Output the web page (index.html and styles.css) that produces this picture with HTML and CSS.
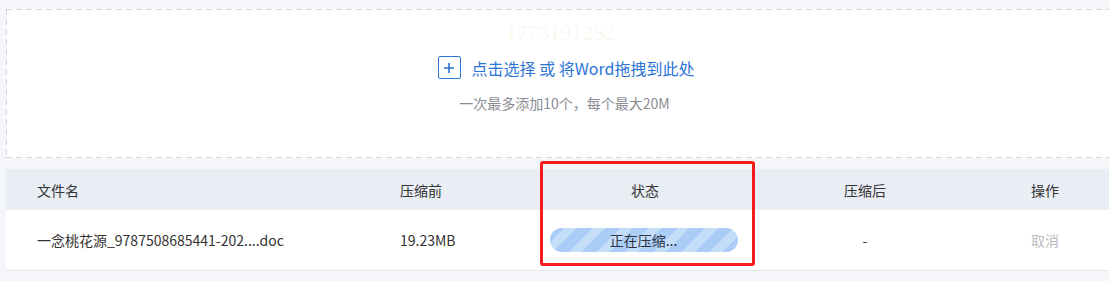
FILE: index.html
```html
<!DOCTYPE html>
<html lang="zh-CN">
<head>
    <meta charset="UTF-8">
    <meta name="viewport" content="width=device-width, initial-scale=1.0">
    <title>Word压缩</title>
    <link rel="stylesheet" href="styles.css">
</head>
<body>
    <div class="page">
        <div class="upload-zone">
            <div class="watermark">1773191252</div>
            <div class="pick">
                <span class="plus-box">
                    <svg width="12" height="12" viewBox="0 0 12 12"><path d="M6 1v10M1 6h10" stroke="#2b74d4" stroke-width="1.6" fill="none"/></svg>
                </span>
                <span class="pick-text">点击选择 或 将Word拖拽到此处</span>
            </div>
            <div class="hint">一次最多添加10个，每个最大20M</div>
        </div>

        <div class="file-table">
            <div class="row head">
                <div class="cell name">文件名</div>
                <div class="cell before">压缩前</div>
                <div class="cell status">状态</div>
                <div class="cell after">压缩后</div>
                <div class="cell op">操作</div>
            </div>
            <div class="row body-row">
                <div class="cell name">一念桃花源_9787508685441-202....doc</div>
                <div class="cell before">19.23MB</div>
                <div class="cell status">
                    <div class="progress">正在压缩...</div>
                </div>
                <div class="cell after">-</div>
                <div class="cell op cancel">取消</div>
            </div>
        </div>

        <!-- 标注框 -->
        <div class="mark-box"></div>
    </div>
</body>
</html>
```

FILE: styles.css
```css
html, body {
    margin: 0;
    padding: 0;
    overflow: hidden;
}

body {
    background: #f4f6f9;
    font-family: "Noto Sans CJK SC", "Noto Sans", sans-serif;
    color: #333;
}

.page {
    position: relative;
    width: 1109px;
    height: 281px;
    padding: 9px 0 0 6px;
    box-sizing: border-box;
}

.upload-zone {
    height: 149px;
    margin-right: -30px;
    background-color: #fff;
    background-image:
        repeating-linear-gradient(90deg, #d3d6dc 0 6px, transparent 6px 10px),
        repeating-linear-gradient(90deg, #d3d6dc 0 6px, transparent 6px 10px),
        repeating-linear-gradient(180deg, #d3d6dc 0 6px, transparent 6px 10px);
    background-size: 100% 1px, 100% 1px, 1px 100%;
    background-position: 0 0, 0 100%, 0 0;
    background-repeat: no-repeat;
    display: flex;
    flex-direction: column;
    align-items: center;
    padding-right: 30px;
}

.watermark {
    font-family: "Liberation Serif", serif;
    font-size: 22px;
    color: #f9f8f0;
    margin-top: 11px;
    height: 26px;
    line-height: 26px;
    margin-left: 6px;
}

.pick {
    display: flex;
    align-items: center;
    gap: 11px;
    margin-top: 10px;
    margin-left: 17px;
}

.plus-box {
    width: 21px;
    height: 21px;
    border: 1px solid #2b74d4;
    border-radius: 2px;
    display: flex;
    align-items: center;
    justify-content: center;
}

.pick-text {
    font-size: 16px;
    color: #2b74d4;
    line-height: 22px;
}

.hint {
    font-size: 14px;
    color: #8a8d93;
    margin-top: 14px;
    line-height: 20px;
    margin-left: 14px;
}

.file-table {
    margin-top: 11px;
    margin-right: -30px;
    background: #fff;
    border-bottom: 1px solid #e6e8ec;
}

.row {
    display: grid;
    grid-template-columns: 363px 171px 210px 230px 160px;
    align-items: center;
    font-size: 14px;
}

.row.head {
    height: 41px;
    background: #e9edf4;
    color: #333;
}

.row.body-row {
    height: 60px;
}

.cell.name,
.cell.before {
    padding-left: 31px;
}

.cell.status,
.cell.after {
    text-align: center;
}

.cell.status {
    display: flex;
    justify-content: center;
}

.cell.op {
    padding-left: 51px;
}

.cancel {
    color: #b8bbc0;
}

.progress {
    width: 188px;
    height: 24px;
    margin-left: -3px;
    border-radius: 12px;
    line-height: 24px;
    text-align: center;
    color: #2d3340;
    background-color: #a9cdf6;
    background-image: repeating-linear-gradient(-45deg, #a9cdf6 0 11px, #c4defa 11px 20px);
}

.mark-box {
    position: absolute;
    left: 540px;
    top: 161px;
    width: 209px;
    height: 99px;
    border: 3px solid #f21c1c;
    border-radius: 3px;
}
```
